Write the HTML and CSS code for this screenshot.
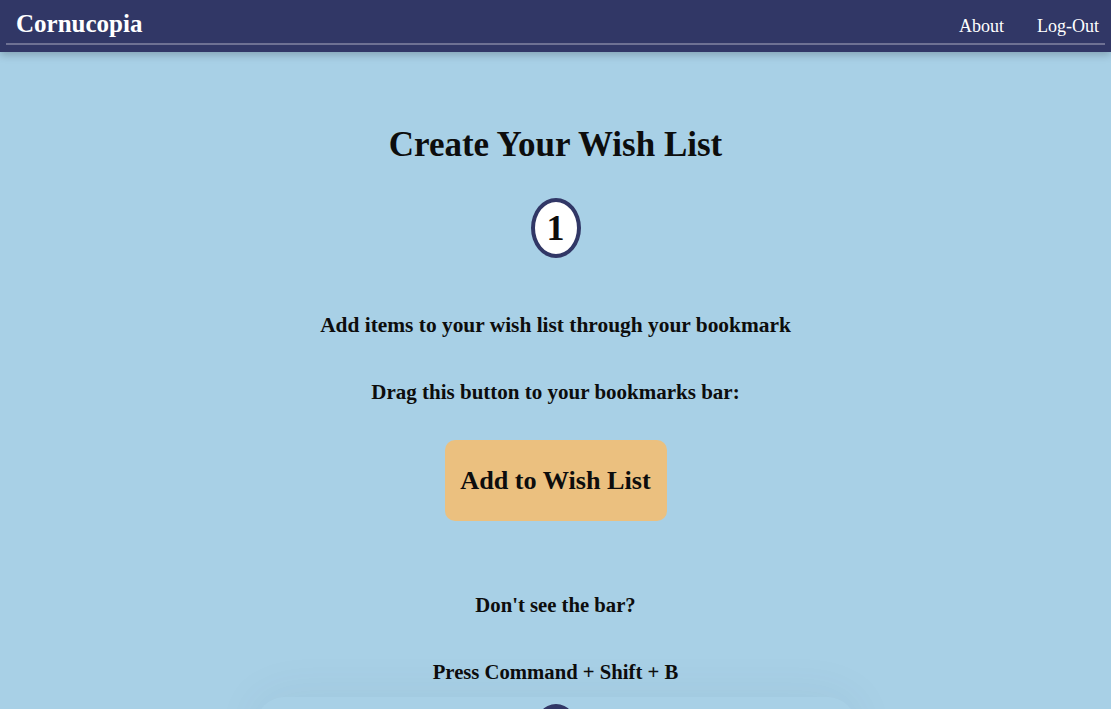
FILE: index.html
```html
<!DOCTYPE html>
<html lang="en">
<head>
<meta charset="utf-8">
<title>Cornucopia - Create Your Wish List</title>
<link rel="stylesheet" href="styles.css">
</head>
<body>
<header class="navbar">
  <div class="navbar-inner">
    <a class="brand" href="#">Cornucopia</a>
    <nav class="nav-links">
      <a href="#">About</a>
      <a href="#">Log-Out</a>
    </nav>
  </div>
</header>
<main class="page">
  <h1 class="title">Create Your Wish List</h1>
  <section class="step">
    <div class="step-num">1</div>
    <p class="step-text first">Add items to your wish list through your bookmark</p>
    <p class="step-text drag">Drag this button to your bookmarks bar:</p>
    <a class="bookmark-btn" href="#">Add to Wish List</a>
    <p class="step-text help">Don't see the bar?</p>
    <p class="step-text help">Press Command + Shift + B</p>
  </section>
  <section class="step next">
    <div class="step-num dot"></div>
  </section>
</main>
</body>
</html>
```
FILE: styles.css
```css
html, body {
  margin: 0;
  padding: 0;
}
body {
  background: #a8d0e6;
  font-family: "Liberation Serif", "Times New Roman", serif;
  color: #0d0d0d;
  overflow: hidden;
}
a { color: inherit; text-decoration: none; }

.navbar {
  background: #313766;
  height: 52px;
  box-shadow: 0 3px 8px rgba(0, 0, 0, 0.22);
  position: relative;
  z-index: 2;
  padding: 0 6px;
}
.navbar-inner {
  height: 43px;
  border-bottom: 2px solid #6e7193;
  display: flex;
  align-items: center;
  justify-content: space-between;
  padding: 0 6px 0 10px;
}
.brand {
  color: #ffffff;
  font-weight: bold;
  font-size: 25px;
  padding-top: 5px;
}
.nav-links {
  display: flex;
  gap: 33px;
  padding-top: 9px;
}
.nav-links a {
  color: #ffffff;
  font-size: 18px;
}

.page {
  display: flex;
  flex-direction: column;
  align-items: center;
  padding-top: 73px;
}
.title {
  margin: 0;
  font-size: 35px;
  font-weight: bold;
  line-height: 40px;
}
.step {
  display: flex;
  flex-direction: column;
  align-items: center;
}
.step-num {
  box-sizing: border-box;
  width: 50px;
  height: 60px;
  border: 4px solid #313766;
  border-radius: 50%;
  background: #ffffff;
  display: flex;
  align-items: center;
  justify-content: center;
  font-size: 36px;
  font-weight: bold;
  margin-top: 33px;
}
.step-text {
  margin: 0;
  font-size: 21.4px;
  font-weight: bold;
  line-height: 26px;
  margin-top: 41px;
}
.step-text.first {
  margin-top: 54px;
}
.step-text.drag {
  font-size: 21px;
}
.bookmark-btn {
  margin-top: 35px;
  width: 222px;
  height: 81px;
  border-radius: 10px;
  background: #ebc07f;
  display: flex;
  align-items: center;
  justify-content: center;
  font-size: 26.2px;
  font-weight: bold;
}
.step-text.help {
  font-size: 20.7px;
}
.bookmark-btn + .help {
  margin-top: 71px;
}
.step.next {
  margin-top: 12px;
  width: 600px;
  padding-top: 7px;
  box-shadow: 0 0 50px rgba(40, 70, 100, 0.07);
  border-radius: 80px;
}
.step.next .step-num {
  margin-top: 0;
  width: 44px;
  height: 50px;
  background: #313766;
}
```
